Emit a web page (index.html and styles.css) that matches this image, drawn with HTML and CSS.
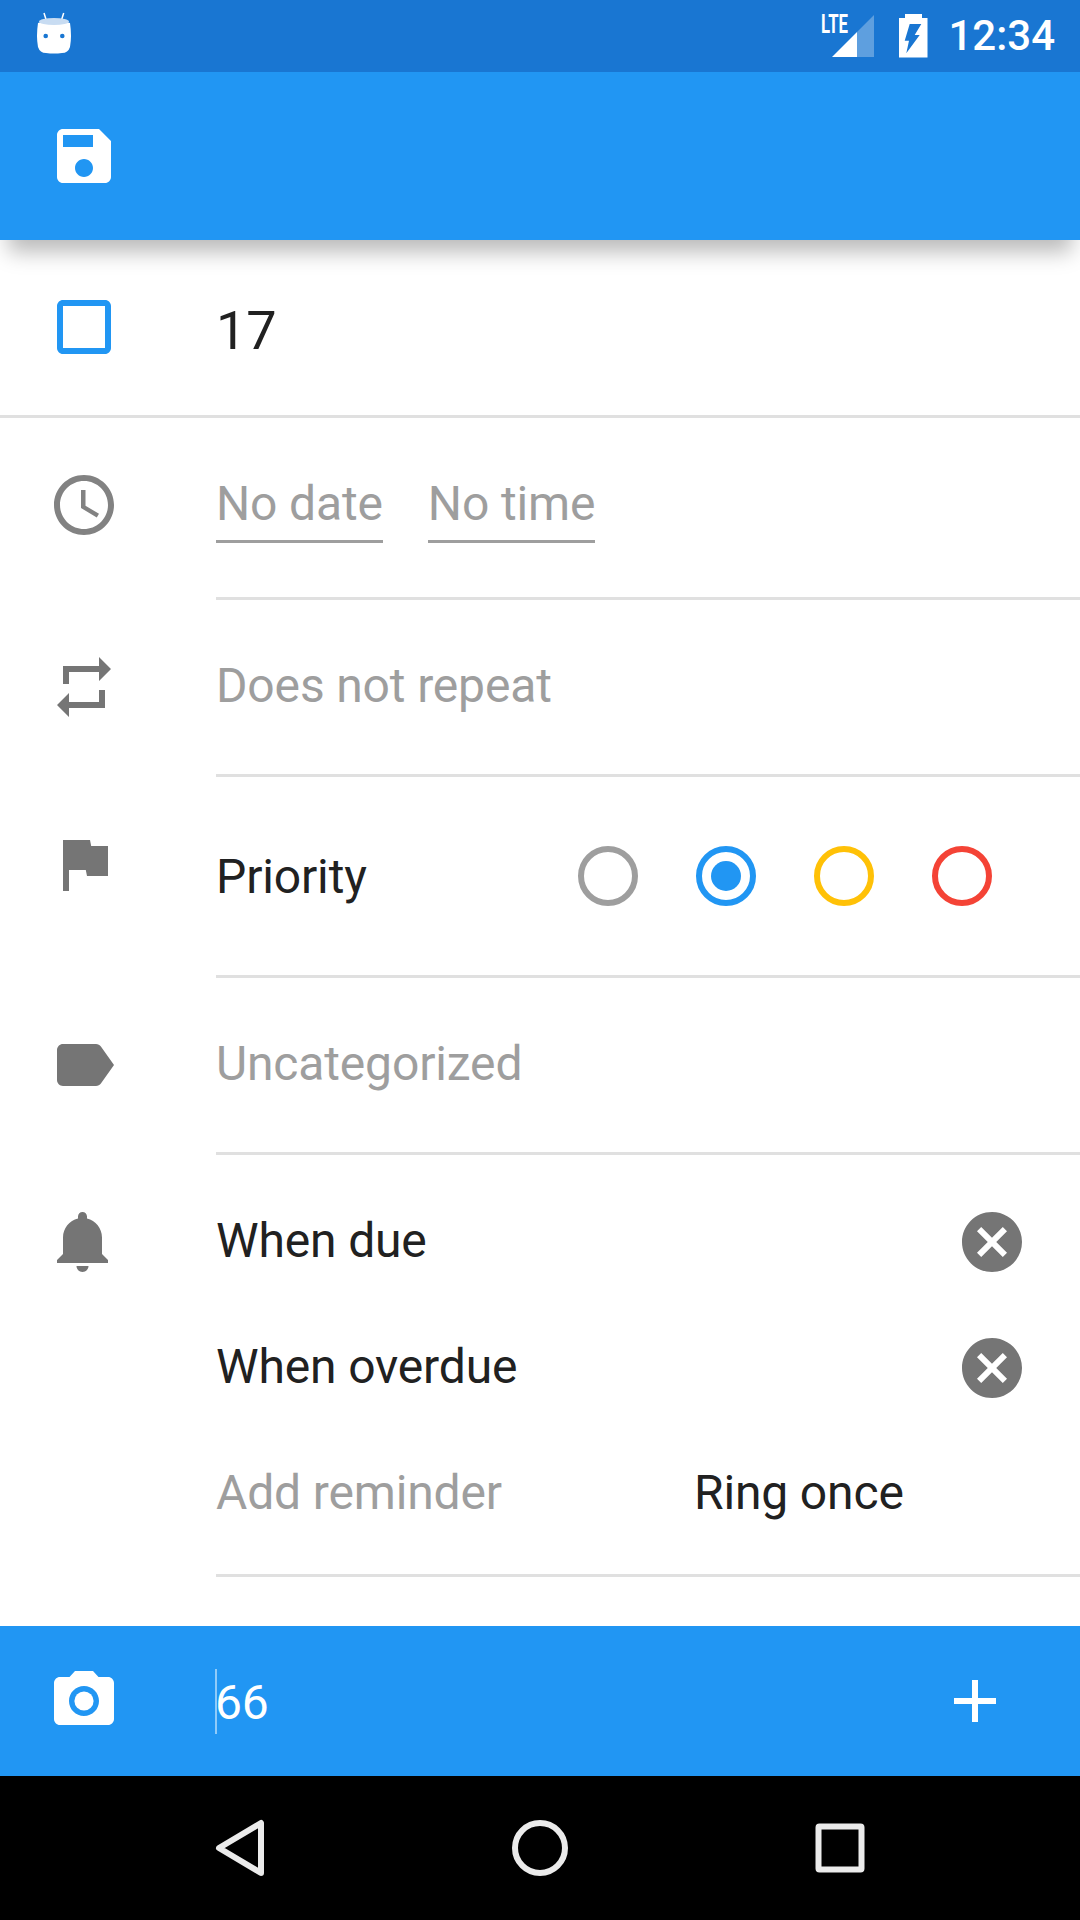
FILE: index.html
```html
<!DOCTYPE html>
<html lang="en">
<head>
<meta charset="utf-8">
<title>Edit task</title>
<link rel="stylesheet" href="styles.css">
</head>
<body>
<div class="screen">
  <div class="status">
    <svg class="bot" viewBox="0 0 36 44">
      <path class="bot-ant" d="M8 3l2.5 8M27.7 3l-2.5 8"/>
      <path class="bot-body" d="M2 13Q18 7 34 13Q36 26 34 37Q32 43 26 43Q18 44 10 43Q4 43 2 37Q0 26 2 13z"/>
      <ellipse class="bot-top" cx="18" cy="11.5" rx="15" ry="3.6"/>
      <circle class="bot-eye" cx="9.7" cy="26" r="2.3"/>
      <circle class="bot-eye" cx="26.3" cy="26" r="2.3"/>
    </svg>
    <div class="status-right">
      <svg class="signal" viewBox="0 0 55 50">
        <text class="lte" x="1" y="25" textLength="27" lengthAdjust="spacingAndGlyphs">LTE</text>
        <path class="sig-on" d="M12 49L37 24V49z"/>
        <path class="sig-off" d="M37 24L54 7V49H37z"/>
      </svg>
      <svg class="battery" viewBox="0 0 30 44">
        <path class="batt" fill-rule="evenodd" d="M6 0H23V4H28.5V43.5H0V4H6zM10.7 10L5.7 26.7H10L7.3 39.3L20.7 21H15.7L22.3 10z"/>
      </svg>
      <span class="clock">12:34</span>
    </div>
  </div>

  <div class="toolbar">
    <svg class="ic ic-white" viewBox="0 0 24 24"><path d="M17 3H5c-1.11 0-2 .9-2 2v14c0 1.1.89 2 2 2h14c1.1 0 2-.9 2-2V7l-4-4zm-5 16c-1.66 0-3-1.34-3-3s1.34-3 3-3 3 1.34 3 3-1.34 3-3 3zm3-10H5V5h10v4z"/></svg>
  </div>

  <div class="row row-title">
    <svg class="ic ic-blue" viewBox="0 0 24 24"><path d="M19 5v14H5V5h14m0-2H5c-1.1 0-2 .9-2 2v14c0 1.1.9 2 2 2h14c1.1 0 2-.9 2-2V5c0-1.1-.9-2-2-2z"/></svg>
    <div class="body"><span class="title">17</span></div>
  </div>

  <div class="row row-date">
    <svg class="ic ic-clock" viewBox="0 0 24 24"><path d="M11.99 2C6.47 2 2 6.48 2 12s4.47 10 9.99 10C17.52 22 22 17.52 22 12S17.52 2 11.99 2zM12 20c-4.42 0-8-3.58-8-8s3.58-8 8-8 8 3.58 8 8-3.58 8-8 8z"/><path d="M12.5 7H11v6l5.25 3.15.75-1.23-4.5-2.67z"/></svg>
    <div class="body body-date">
      <span class="text hint field">No date</span>
      <span class="text hint field">No time</span>
    </div>
  </div>

  <div class="row row-repeat">
    <svg class="ic" viewBox="0 0 24 24"><path d="M7 7h10v3l4-4-4-4v3H5v6h2V7zm10 10H7v-3l-4 4 4 4v-3h12v-6h-2v4z"/></svg>
    <div class="body"><span class="text hint">Does not repeat</span></div>
  </div>

  <div class="row row-priority">
    <svg class="ic" viewBox="0 0 24 24"><path d="M14.4 6L14 4H5v17h2v-7h5.6l.4 2h7V6z"/></svg>
    <div class="body body-priority">
      <span class="text priority-label">Priority</span>
      <div class="radios">
        <span class="radio radio-none"></span>
        <span class="radio radio-low"><span class="dot"></span></span>
        <span class="radio radio-mid"></span>
        <span class="radio radio-high"></span>
      </div>
    </div>
  </div>

  <div class="row row-tag">
    <svg class="ic" viewBox="0 0 24 24"><path d="M17.63 5.84C17.27 5.33 16.67 5 16 5L5 5.01C3.9 5.01 3 5.9 3 7v10c0 1.1.9 1.99 2 1.99L16 19c.67 0 1.27-.33 1.63-.84L22 12l-4.37-6.16z"/></svg>
    <div class="body"><span class="text hint">Uncategorized</span></div>
  </div>

  <div class="row row-remind">
    <svg class="ic" viewBox="0 0 24 24"><path d="M11.5 22c1.1 0 2-.9 2-2h-4c0 1.1.9 2 2 2zm6.5-6v-5.5c0-3.07-2.13-5.64-5-6.32V3.5c0-.83-.67-1.5-1.5-1.5S10 2.67 10 3.5v.68c-2.87.68-5 3.25-5 6.32V16l-2 2v1h17v-1l-2-2z"/></svg>
    <div class="body body-remind">
      <div class="rem">
        <span class="text">When due</span>
        <svg class="ic ic-x" viewBox="0 0 24 24"><path d="M12 2C6.47 2 2 6.47 2 12s4.47 10 10 10 10-4.47 10-10S17.53 2 12 2zm5 13.59L15.59 17 12 13.41 8.41 17 7 15.59 10.59 12 7 8.41 8.41 7 12 10.59 15.59 7 17 8.41 13.41 12 17 15.59z"/></svg>
      </div>
      <div class="rem">
        <span class="text">When overdue</span>
        <svg class="ic ic-x" viewBox="0 0 24 24"><path d="M12 2C6.47 2 2 6.47 2 12s4.47 10 10 10 10-4.47 10-10S17.53 2 12 2zm5 13.59L15.59 17 12 13.41 8.41 17 7 15.59 10.59 12 7 8.41 8.41 7 12 10.59 15.59 7 17 8.41 13.41 12 17 15.59z"/></svg>
      </div>
      <div class="rem">
        <span class="text hint add">Add reminder</span>
        <span class="text">Ring once</span>
      </div>
    </div>
  </div>

  <div class="spacer"></div>

  <div class="comment">
    <svg class="ic ic-white" viewBox="0 0 24 24"><circle cx="12" cy="12" r="3.2"/><path d="M9 2L7.17 4H4c-1.1 0-2 .9-2 2v12c0 1.1.9 2 2 2h16c1.1 0 2-.9 2-2V6c0-1.1-.9-2-2-2h-3.17L15 2H9zm3 15c-2.76 0-5-2.24-5-5s2.24-5 5-5 5 2.24 5 5-2.24 5-5 5z"/></svg>
    <span class="caret"></span>
    <span class="text comment-text">66</span>
    <svg class="ic ic-white ic-add" viewBox="0 0 24 24"><path d="M19 13h-6v6h-2v-6H5v-2h6V5h2v6h6v2z"/></svg>
  </div>

  <div class="nav">
    <svg class="nav-ic" viewBox="0 0 72 72"><path d="M15 36L57 11V61z"/></svg>
    <svg class="nav-ic" viewBox="0 0 72 72"><circle cx="36" cy="36" r="25"/></svg>
    <svg class="nav-ic" viewBox="0 0 72 72"><rect x="14.5" y="14.5" width="43" height="43" rx="1"/></svg>
  </div>
</div>
</body>
</html>
```

FILE: styles.css
```css
* { box-sizing: border-box; }
html, body { margin: 0; padding: 0; }
body { background: #fff; font-family: Roboto, "Noto Sans", sans-serif; }
.screen { width: 1080px; height: 1920px; display: flex; flex-direction: column; overflow: hidden; background: #fff; }

.status { height: 72px; flex: none; background: #1976d2; display: flex; align-items: flex-start; justify-content: space-between; padding: 10px 25px 0 36px; }
.bot { width: 36px; height: 44px; }
.bot-ant { stroke: #fff; stroke-width: 1.5; fill: none; }
.bot-body { fill: #fff; }
.bot-top { fill: #c8dcf2; }
.bot-eye { fill: #1976d2; }
.status-right { display: flex; align-items: flex-start; gap: 19px; }
.signal { width: 55px; height: 50px; margin-top: -2px; margin-right: 5px; }
.lte { font-family: Roboto, sans-serif; font-weight: 700; font-size: 25px; fill: #fff; }
.sig-on { fill: #fff; }
.sig-off { fill: #fff; fill-opacity: .3; }
.battery { width: 30px; height: 44px; margin-top: 4px; }
.batt { fill: #fff; }
.clock { font-size: 42px; font-weight: 500; color: #fff; line-height: 52px; }

.toolbar { height: 168px; flex: none; background: #2196f3; display: flex; align-items: center; position: relative; z-index: 1; box-shadow: 0 20px 20px -8px rgba(0,0,0,.27); }

.ic { width: 72px; height: 72px; flex: none; fill: #757575; margin-left: 48px; }
.ic-white { fill: #fff; }
.ic-blue { fill: #2196f3; }
.ic-clock { fill: #828282; }

.row { display: flex; flex: none; align-items: flex-start; }
.row > .ic { margin-top: 51px; margin-right: 96px; }
.body { flex: 1; align-self: stretch; padding-top: 51px; border-bottom: 3px solid #e0e0e0; }
.row-title { height: 178px; border-bottom: 3px solid #e0e0e0; }
.row-title .body { border-bottom: 0; }
.row-date { height: 182px; }
.row-repeat { height: 177px; }
.row-priority { height: 201px; }
.row-tag { height: 177px; }
.row-remind { height: 422px; }

.text { font-size: 48px; line-height: 70px; letter-spacing: -.15px; color: #212121; display: block; }
.hint { color: #9e9e9e; }
.title { font-size: 54px; line-height: 72px; color: #212121; display: block; margin-top: 4px; }

.body-date { display: flex; align-items: flex-start; gap: 45px; }
.field { border-bottom: 3px solid #9e9e9e; height: 74px; }

.body-priority { display: flex; justify-content: space-between; padding-right: 88px; padding-top: 69px; }
.priority-label { line-height: 62px; }
.radios { display: flex; gap: 58px; }
.radio { width: 60px; height: 60px; border-radius: 50%; border: 6px solid; display: flex; align-items: center; justify-content: center; }
.radio-none { border-color: #9e9e9e; }
.radio-low { border-color: #2196f3; }
.radio-mid { border-color: #ffc107; }
.radio-high { border-color: #f44336; }
.dot { width: 30px; height: 30px; border-radius: 50%; background: #2196f3; }

.body-remind { padding-top: 24px; }
.rem { height: 126px; display: flex; align-items: center; }
.rem .text { margin-top: -2px; }
.add { width: 478px; }
.ic-x { margin-left: auto; margin-right: 52px; }

.spacer { flex: 1; }

.comment { height: 150px; flex: none; background: #2196f3; display: flex; align-items: center; }
.comment > .ic:first-child { margin-right: 95px; }
.caret { width: 2px; height: 65px; background: #90cbf9; margin-right: -2px; }
.comment-text { color: #fff; margin-top: 4px; }
.ic-add { margin-left: auto; margin-right: 69px; }

.nav { height: 144px; flex: none; background: #000; display: grid; grid-template-columns: repeat(3, 300px); justify-content: center; justify-items: center; align-items: center; }
.nav-ic { width: 72px; height: 72px; fill: none; stroke: #ebebeb; stroke-width: 6; stroke-linejoin: round; }
```
